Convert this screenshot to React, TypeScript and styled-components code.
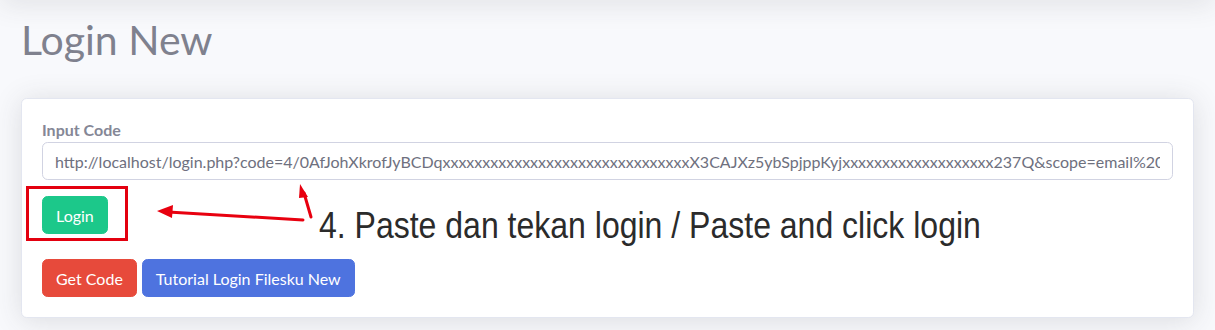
import styled, { createGlobalStyle } from 'styled-components'

const GlobalStyle = createGlobalStyle`
    html, body {
        margin: 0;
        padding: 0;
        background-color: #f8f9fc;
    }
    body {
        font-family: Lato, "Noto Sans", sans-serif;
        color: #858796;
        overflow: hidden;
    }
`

const Page = styled.div`
    position: relative;
    min-height: 330px;
    padding: 0 21px;
    box-sizing: border-box;
    /* the topbar sits just above the visible part, only its shadow shows */
    &::before {
        content: '';
        position: absolute;
        left: 0;
        right: 0;
        top: -20px;
        height: 20px;
        box-shadow: 0 .15rem 1.75rem 0 rgba(58, 59, 69, .15);
    }
`
const Title = styled.h1`
    margin: 0;
    padding-top: 16px;
    margin-bottom: 34px;
    font-size: 41px;
    line-height: 48px;
    font-weight: 400;
    color: #7f818e;
`
const Card = styled.div`
    position: relative;
    background: #fff;
    border: 1px solid #e3e6f0;
    border-radius: .35rem;
    box-shadow: 0 .15rem 1.75rem 0 rgba(58, 59, 69, .15);
`
const CardBody = styled.div`
    padding: 19px 20px 20px 20px;
`
const Label = styled.label`
    display: block;
    font-size: 16px;
    line-height: 24px;
    font-weight: 700;
    color: #858796;
`
const Input = styled.input`
    display: block;
    width: 100%;
    height: 38px;
    box-sizing: border-box;
    padding: 6px 12px;
    font-family: inherit;
    font-size: 16px;
    color: #6e707e;
    border: 1px solid #d1d3e2;
    border-radius: .35rem;
    background: #fff;
    outline: none;
`
const Row = styled.div<{ $gap?: number }>`
    display: flex;
    gap: 5px;
    margin-top: ${p => p.$gap ?? 16}px;
`
const Button = styled.button<{ $bg: string }>`
    height: 38px;
    padding: 0 13px;
    font-family: inherit;
    font-size: 16px;
    color: #fff;
    background-color: ${p => p.$bg};
    border: 1px solid ${p => p.$bg};
    border-radius: .35rem;
    cursor: pointer;
`

/* screenshot annotations drawn over the card */
const MarkBox = styled.div`
    position: absolute;
    left: 4px;
    top: 87px;
    width: 102px;
    height: 55px;
    box-sizing: border-box;
    border: 3px solid #e3000f;
`
const Note = styled.div`
    position: absolute;
    left: 297px;
    top: 105px;
    font-family: "Liberation Sans", Arial, sans-serif;
    font-size: 37px;
    line-height: 44px;
    color: #2b2b2b;
    white-space: nowrap;
    transform: scaleX(0.865);
    transform-origin: left center;
`
const Arrows = styled.svg`
    position: absolute;
    left: 0;
    top: 0;
    pointer-events: none;
`

const code = 'http://localhost/login.php?code=4/0AfJohXkrofJyBCDq' +
    'x'.repeat(31) + 'X3CAJXz5ybSpjppKyj' + 'x'.repeat(19) +
    '237Q&scope=email%20https://www.googleapis.com/auth/drive'

export default function App() {
    return (
        <>
            <GlobalStyle />
            <Page>
                <Title>Login New</Title>
                <Card>
                    <CardBody>
                        <Label htmlFor="code">Input Code</Label>
                        <Input id="code" type="text" defaultValue={code} />
                        <Row>
                            <Button $bg="#1cc88a">Login</Button>
                        </Row>
                        <Row $gap={25}>
                            <Button $bg="#e74a3b">Get Code</Button>
                            <Button $bg="#4e73df">Tutorial Login Filesku New</Button>
                        </Row>
                    </CardBody>
                    <MarkBox />
                    <Arrows width="320" height="160">
                        <g stroke="#e8000f" strokeWidth="3" fill="#e8000f" strokeLinecap="round">
                            <line x1="281" y1="121" x2="146" y2="113" />
                            <polygon points="135,112 151,106 150,119" stroke="none" />
                            <line x1="289" y1="118" x2="282" y2="94" />
                            <polygon points="278,85 286,98 277,99" stroke="none" />
                        </g>
                    </Arrows>
                    <Note>4. Paste dan tekan login / Paste and click login</Note>
                </Card>
            </Page>
        </>
    )
}
